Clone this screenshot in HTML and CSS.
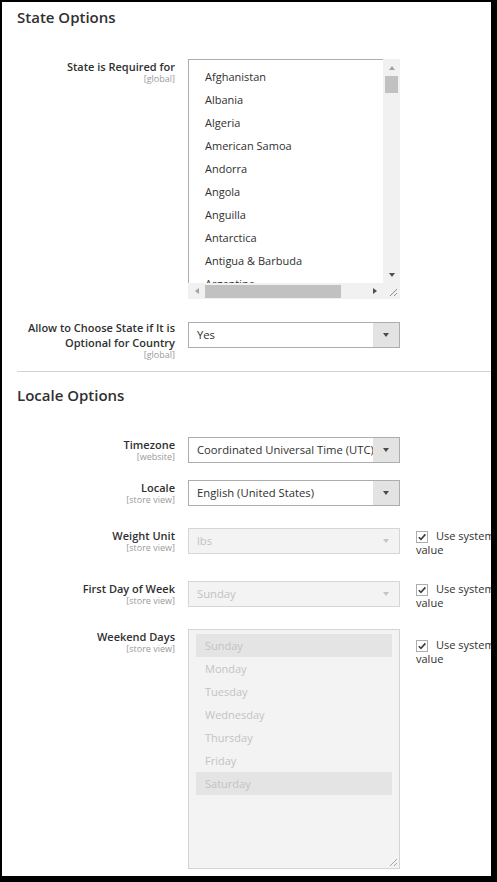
FILE: index.html
```html
<!DOCTYPE html>
<html>
<head>
<meta charset="utf-8">
<link rel="stylesheet" href="styles.css">
</head>
<body>
<div class="frame">
  <section class="fieldset">
    <h2 class="fs-title">State Options</h2>

    <div class="row row-first">
      <div class="label"><span class="label-text">State is Required for</span><span class="scope">[global]</span></div>
      <div class="multi">
        <div class="multi-list">
          <div class="opt">Afghanistan</div>
          <div class="opt">Albania</div>
          <div class="opt">Algeria</div>
          <div class="opt">American Samoa</div>
          <div class="opt">Andorra</div>
          <div class="opt">Angola</div>
          <div class="opt">Anguilla</div>
          <div class="opt">Antarctica</div>
          <div class="opt">Antigua &amp; Barbuda</div>
          <div class="opt">Argentina</div>
          <div class="opt">Armenia</div>
        </div>
        <div class="vbar">
          <span class="arr-box"><span class="arr arr-up"></span></span>
          <span class="vthumb"></span>
          <span class="vtrack"></span>
          <span class="arr-box"><span class="arr arr-down"></span></span>
        </div>
        <div class="hbar">
          <span class="arr-box"><span class="arr arr-left"></span></span>
          <span class="hthumb"></span>
          <span class="htrack"></span>
          <span class="arr-box"><span class="arr arr-right"></span></span>
        </div>
        <div class="corner">
          <svg class="grip" width="9" height="9" viewBox="0 0 9 9"><path d="M1 8 L8 1 M5 8 L8 5" stroke="#8f8f8f" stroke-width="1" fill="none"/></svg>
        </div>
      </div>
    </div>

    <div class="row row-allow">
      <div class="label label-up"><span class="label-text">Allow to Choose State if It is Optional for Country</span><span class="scope">[global]</span></div>
      <div class="select">
        <span class="select-text">Yes</span>
        <span class="select-arrow"><span class="tri"></span></span>
      </div>
    </div>
  </section>

  <section class="fieldset fieldset-next">
    <h2 class="fs-title">Locale Options</h2>

    <div class="row row-first">
      <div class="label"><span class="label-text">Timezone</span><span class="scope">[website]</span></div>
      <div class="select">
        <span class="select-text">Coordinated Universal Time (UTC)</span>
        <span class="select-arrow"><span class="tri"></span></span>
      </div>
    </div>

    <div class="row row-locale">
      <div class="label"><span class="label-text">Locale</span><span class="scope">[store view]</span></div>
      <div class="select">
        <span class="select-text">English (United States)</span>
        <span class="select-arrow"><span class="tri"></span></span>
      </div>
    </div>

    <div class="row row-weight">
      <div class="label"><span class="label-text">Weight Unit</span><span class="scope">[store view]</span></div>
      <div class="select is-disabled">
        <span class="select-text">lbs</span>
        <span class="select-arrow"><span class="tri"></span></span>
      </div>
      <div class="use-default"><span class="check"><svg width="10" height="10" viewBox="0 0 10 10"><path d="M1.8 5.2 L4 7.4 L8.4 2.4" stroke="#3d3d3d" stroke-width="1.6" fill="none"/></svg></span>Use system value</div>
    </div>

    <div class="row row-day">
      <div class="label"><span class="label-text">First Day of Week</span><span class="scope">[store view]</span></div>
      <div class="select is-disabled">
        <span class="select-text">Sunday</span>
        <span class="select-arrow"><span class="tri"></span></span>
      </div>
      <div class="use-default"><span class="check"><svg width="10" height="10" viewBox="0 0 10 10"><path d="M1.8 5.2 L4 7.4 L8.4 2.4" stroke="#3d3d3d" stroke-width="1.6" fill="none"/></svg></span>Use system value</div>
    </div>

    <div class="row row-weekend">
      <div class="label"><span class="label-text">Weekend Days</span><span class="scope">[store view]</span></div>
      <div class="multi-disabled">
        <div class="opt is-selected">Sunday</div>
        <div class="opt">Monday</div>
        <div class="opt">Tuesday</div>
        <div class="opt">Wednesday</div>
        <div class="opt">Thursday</div>
        <div class="opt">Friday</div>
        <div class="opt is-selected">Saturday</div>
        <svg class="grip grip-end" width="9" height="9" viewBox="0 0 9 9"><path d="M1 8 L8 1 M5 8 L8 5" stroke="#a5a5a5" stroke-width="1" fill="none"/></svg>
      </div>
      <div class="use-default use-default-tall"><span class="check"><svg width="10" height="10" viewBox="0 0 10 10"><path d="M1.8 5.2 L4 7.4 L8.4 2.4" stroke="#3d3d3d" stroke-width="1.6" fill="none"/></svg></span>Use system value</div>
    </div>
  </section>
</div>
</body>
</html>
```

FILE: styles.css
```css
html, body {
  margin: 0;
  padding: 0;
  background: #000;
}

body {
  font-family: "Open Sans", "Noto Sans", sans-serif;
  color: #303030;
}

.frame {
  margin: 2px 0 0 2px;
  width: 489px;
  height: 874px;
  box-sizing: border-box;
  background: #fff;
  overflow: hidden;
  padding: 5px 0 0 15px;
}

.fs-title {
  margin: 0;
  font-size: 15px;
  line-height: 20px;
  font-weight: 600;
  color: #303030;
}

.fieldset-next {
  margin-top: 9px;
  border-top: 1px solid #d3d3d3;
  padding-top: 13px;
}

.row {
  display: grid;
  grid-template-columns: 158px 212px 95px;
  column-gap: 13px;
  align-items: start;
}

.row-first { margin-top: 32px; }
.row-allow { margin-top: 23px; }
.row-locale { margin-top: 17px; }
.row-weight { margin-top: 22px; }
.row-day { margin-top: 24px; }
.row-weekend { margin-top: 19px; }

.label {
  display: flex;
  flex-direction: column;
  align-items: flex-end;
  text-align: right;
}

.label-up {
  margin-top: -2px;
  margin-bottom: 2px;
}

.label-text {
  font-size: 11px;
  line-height: 15px;
  font-weight: 600;
  color: #303030;
}

.scope {
  font-size: 9px;
  line-height: 10px;
  color: #9a9a9a;
}

/* multiselect with scrollbars */
.multi {
  height: 240px;
  display: grid;
  grid-template-columns: 1fr 17px;
  grid-template-rows: 1fr 16px;
}

.multi-list {
  border-top: 1px solid #adadad;
  border-left: 1px solid #adadad;
  overflow: hidden;
  padding: 5px 7px 0;
}

.opt {
  height: 23px;
  line-height: 23px;
  padding: 0 9px;
  font-size: 11px;
  color: #303030;
  white-space: nowrap;
}

.vbar {
  background: #f1f1f1;
  display: flex;
  flex-direction: column;
}

.hbar {
  background: #f1f1f1;
  display: flex;
}

.arr-box {
  flex: 0 0 17px;
  height: 17px;
  display: flex;
  align-items: center;
  justify-content: center;
}

.hbar .arr-box {
  height: 16px;
}

.vthumb {
  height: 17px;
  margin: 0 2px;
  background: #c1c1c1;
}

.vtrack, .htrack {
  flex: 1;
}

.hthumb {
  width: 136px;
  margin: 2px 0 1px;
  background: #c1c1c1;
}

.arr {
  width: 0;
  height: 0;
}

.arr-up {
  border-left: 3.5px solid transparent;
  border-right: 3.5px solid transparent;
  border-bottom: 4px solid #a3a3a3;
}

.arr-down {
  border-left: 3.5px solid transparent;
  border-right: 3.5px solid transparent;
  border-top: 4px solid #505050;
}

.arr-left {
  border-top: 3.5px solid transparent;
  border-bottom: 3.5px solid transparent;
  border-right: 4px solid #a3a3a3;
}

.arr-right {
  border-top: 3.5px solid transparent;
  border-bottom: 3.5px solid transparent;
  border-left: 4px solid #505050;
}

.corner {
  background: #f1f1f1;
  display: flex;
  align-items: flex-end;
  justify-content: flex-end;
}

.grip {
  display: block;
  margin: 0 2px 2px 0;
}

/* select */
.select {
  height: 26px;
  box-sizing: border-box;
  border: 1px solid #adadad;
  background: #fff;
  display: flex;
  font-size: 11.25px;
  color: #303030;
}

.select-text {
  flex: 1;
  padding-left: 8px;
  line-height: 24px;
  white-space: nowrap;
  overflow: hidden;
}

.select-arrow {
  flex: 0 0 26px;
  background: #e3e3e3;
  display: flex;
  align-items: center;
  justify-content: center;
}

.tri {
  width: 0;
  height: 0;
  border-left: 3.5px solid transparent;
  border-right: 3.5px solid transparent;
  border-top: 4px solid #514943;
}

.select.is-disabled {
  background: #f3f3f3;
  border-color: #d6d6d6;
  color: #c2c2c2;
}

.select.is-disabled .select-arrow {
  background: transparent;
}

.select.is-disabled .tri {
  border-top-color: #c4c4c4;
}

/* use system value */
.use-default {
  margin-left: 3px;
  padding-top: 1px;
  font-size: 11px;
  line-height: 14px;
  color: #303030;
}

.use-default-tall {
  padding-top: 9px;
}

.check {
  display: inline-flex;
  align-items: center;
  justify-content: center;
  width: 12px;
  height: 12px;
  box-sizing: border-box;
  border: 1px solid #adadad;
  background: #fff;
  vertical-align: -2px;
  margin-right: 8px;
}

.check svg {
  display: block;
}

/* disabled multiselect */
.multi-disabled {
  height: 240px;
  box-sizing: border-box;
  border: 1px solid #d4d4d4;
  background: #f3f3f3;
  padding: 4px 7px 0;
  display: flex;
  flex-direction: column;
}

.multi-disabled .opt {
  color: #c3c3c3;
}

.multi-disabled .opt.is-selected {
  background: #e4e4e4;
}

.grip-end {
  margin-top: auto;
  align-self: flex-end;
  margin-right: -6px;
  margin-bottom: 1px;
}
```
